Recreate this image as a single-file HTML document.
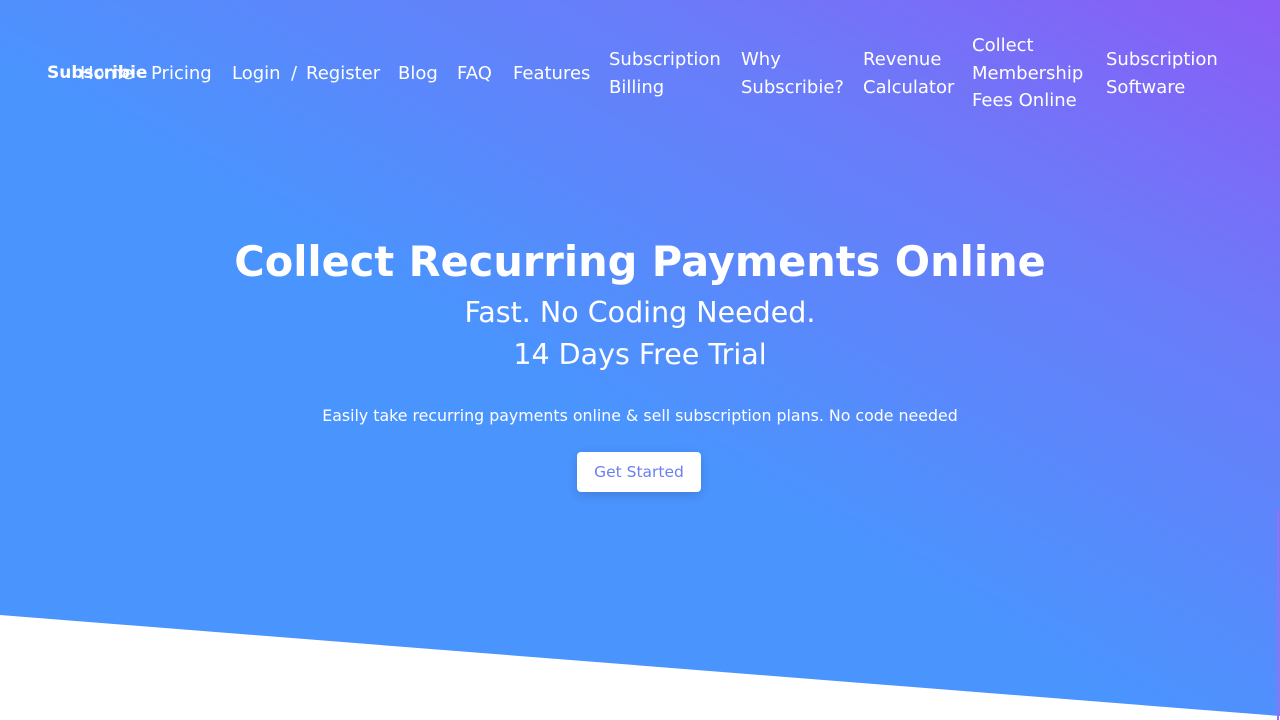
<!DOCTYPE html>
<html><head><meta charset="utf-8"><style>
*{margin:0;padding:0;box-sizing:border-box}
html,body{width:1280px;height:720px;overflow:hidden;background:#fff}
body{position:relative;font-family:"DejaVu Sans","Liberation Sans",sans-serif;color:#fff}
.bg{position:absolute;left:0;top:0;width:1280px;height:720px;
background:linear-gradient(to bottom left,#8b5cf6 0%,#6a7cf9 25%,#4a94fe 55%,#4a94fe 100%);
clip-path:polygon(0 0,1280px 0,1280px 716px,0 615px)}
.n{position:absolute;font-size:18px;line-height:27.5px;white-space:nowrap;color:#fff}
h1{position:absolute;left:0;width:1280px;text-align:center;top:234px;font-size:41.5px;font-weight:bold;line-height:56px}
.s{position:absolute;left:0;width:1280px;text-align:center;font-size:28.5px;line-height:36px}
p{position:absolute;left:0;width:1280px;text-align:center;top:405px;font-size:15.8px;line-height:22px}
.btn{position:absolute;left:577px;top:452px;width:124px;height:40px;background:#fff;border-radius:4px;color:#6b7ff2;font-size:15.5px;line-height:40px;text-align:center;box-shadow:0 3px 10px rgba(0,0,0,.15)}
.sb{position:absolute;right:1px;top:510px;width:2px;height:210px;background:#9b6cf6}
</style></head><body>
<div class="bg"></div>
<div class="sb"></div>
<div class="n" style="left:47px;top:60px;font-weight:bold;font-size:17px">Subscribie</div>
<div class="n" style="left:80px;top:60px">Home</div>
<div class="n" style="left:151px;top:60px">Pricing</div>
<div class="n" style="left:232px;top:60px">Login</div>
<div class="n" style="left:291px;top:60px">/</div>
<div class="n" style="left:306px;top:60px">Register</div>
<div class="n" style="left:398px;top:60px">Blog</div>
<div class="n" style="left:457px;top:60px">FAQ</div>
<div class="n" style="left:513px;top:60px">Features</div>
<div class="n" style="left:609px;top:46px">Subscription<br>Billing</div>
<div class="n" style="left:741px;top:46px">Why<br>Subscribie?</div>
<div class="n" style="left:863px;top:46px">Revenue<br>Calculator</div>
<div class="n" style="left:972px;top:32px">Collect<br>Membership<br>Fees Online</div>
<div class="n" style="left:1106px;top:46px">Subscription<br>Software</div>
<h1>Collect Recurring Payments Online</h1>
<div class="s" style="top:295px">Fast. No Coding Needed.</div>
<div class="s" style="top:337px">14 Days Free Trial</div>
<p>Easily take recurring payments online &amp; sell subscription plans. No code needed</p>
<div class="btn">Get Started</div>
</body></html>
